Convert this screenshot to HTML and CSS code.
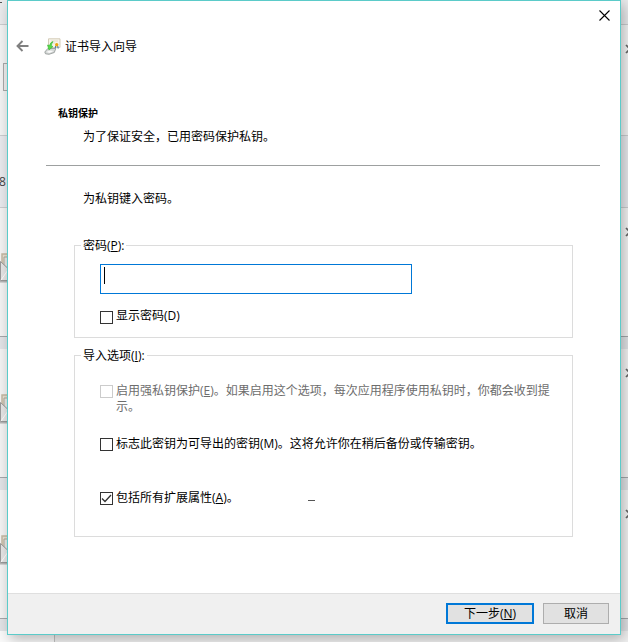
FILE: index.html
```html
<!DOCTYPE html>
<html lang="zh-CN">
<head>
<meta charset="utf-8">
<title>证书导入向导</title>
<link rel="stylesheet" href="styles.css">
</head>
<body>
<svg class="defs" aria-hidden="true">
  <symbol id="mail" viewBox="0 0 14 30">
    <path d="M0 28.500h14" stroke="#b5b5b5" stroke-width="2"/>
    <path d="M2 11V1h12v16z" fill="#e8e0d1" stroke="#c4b8a2" stroke-width="1.500"/>
    <path d="M4 4h10v13H4z" fill="#e7e9e8" stroke="#b0a998"/>
    <path d="M.5 8.500 14 21v6.500H.5z" fill="#e6e6e6" stroke="#999"/>
    <path d="M1 27 8 17" stroke="#fff"/>
  </symbol>
  <symbol id="cross" viewBox="0 0 10 10">
    <path d="m1 1 8 8M9 1 1 9" stroke="#666" stroke-width="1.700" fill="none"/>
  </symbol>
</svg>
<div class="backdrop">
  <div class="strip strip-top"><i class="scrap"></i></div>
  <div class="strip strip-tools"><i class="stub"></i><svg class="cross"><use href="#cross"/></svg></div>
  <div class="strip strip-info"><span>8</span></div>
  <div class="card"><svg class="mail"><use href="#mail"/></svg><svg class="cross"><use href="#cross"/></svg></div>
  <div class="card"><svg class="mail"><use href="#mail"/></svg><svg class="cross"><use href="#cross"/></svg></div>
  <div class="card"><svg class="mail"><use href="#mail"/></svg><svg class="cross"><use href="#cross"/></svg></div>
  <div class="last"><i class="last-side"></i></div>
</div>

<main class="dialog">
  <div class="caption">
    <svg width="11" height="11" viewBox="0 0 11 11"><path d="M.5.5l10 10M10.500.5l-10 10" stroke="#000" stroke-width="1.100"/></svg>
  </div>
  <header class="heading">
    <svg class="back" width="13" height="12" viewBox="0 0 13 12"><path d="M12.500 6H1.500M6.500 1l-5 5 5 5" fill="none" stroke="#808080" stroke-width="1.900"/></svg>
    <svg class="cert" width="17" height="17" viewBox="0 0 17 17">
      <path d="M4.500.8h11.500v8.700H4.500z" fill="#f7f4ea" stroke="#d3cbb7"/>
      <path d="M7 3h7M8 5h3" stroke="#ded7c6" stroke-width=".8"/>
      <path d="m11.700 8-.5 2.500M13.700 8l.5 2.500" stroke="#4b7cae" stroke-width="1.200"/>
      <circle cx="12.700" cy="6.800" r="1.700" fill="#e8a414"/>
      <path d="m.8 14 3-3.500h8l-1.500 4L5 16.300l-3.500-.5z" fill="#d5d8d7" stroke="#8d9390" stroke-width=".8"/>
      <path d="m2.500 14 3-1.500 4 .5-4 2z" fill="#fafafa"/>
      <path d="M9 3.500Q6.500 4 5.500 7.500L3.500 7 5 12l4-3.500-1.700-.6Q7.500 5.500 9 3.500z" fill="#55d947" stroke="#35b933" stroke-width=".6"/>
    </svg>
    <h1>证书导入向导</h1>
  </header>

  <section class="intro">
    <h2>私钥保护</h2>
    <p>为了保证安全，已用密码保护私钥。</p>
  </section>

  <section class="body">
    <p class="prompt">为私钥键入密码。</p>
    <div class="group group-password">
      <div class="legend">密码(<u>P</u>):</div>
      <div class="password"><i class="caret"></i></div>
      <div class="option"><i class="box"></i><span>显示密码(D)</span></div>
    </div>
    <div class="group group-options">
      <div class="legend">导入选项(<u>I</u>):</div>
      <div class="option disabled"><i class="box"></i><span>启用强私钥保护(<u>E</u>)。如果启用这个选项，每次应用程序使用私钥时，你都会收到提<br>示。</span></div>
      <div class="option exportable"><i class="box"></i><span>标志此密钥为可导出的密钥(M)。这将允许你在稍后备份或传输密钥。</span></div>
      <div class="option extended"><i class="box"><svg width="11" height="11" viewBox="0 0 11 11"><path d="m1 5.500 3 3L10 2" fill="none" stroke="#333" stroke-width="1.300"/></svg></i><span>包括所有扩展属性(<u>A</u>)。</span><i class="dash"></i></div>
    </div>
  </section>

  <footer class="actions">
    <div class="button primary">下一步(<u>N</u>)</div>
    <div class="button">取消</div>
  </footer>
</main>
</body>
</html>
```
FILE: styles.css
```css
* { box-sizing: border-box; }

body {
  margin: 0;
  position: relative;
  width: 628px;
  height: 642px;
  overflow: hidden;
  background: #e2e4e7;
  color: #000;
  font: 12px/16px "Open Sans", "Noto Sans CJK SC", sans-serif;
}

h1, h2, p { margin: 0; font-size: 12px; font-weight: 400; }
svg { display: block; flex: none; }
u { text-decoration: underline; text-underline-offset: 1px; text-decoration-thickness: 1px; text-decoration-skip-ink: none; }
.defs { position: absolute; width: 0; height: 0; }

/* Page behind the dialog */
.backdrop { display: flex; flex-direction: column; height: 642px; }
.strip { display: flex; justify-content: space-between; border-bottom: 1px solid #cbcdcf; flex: none; }
.strip-top { height: 25px; background: #eaebed; }
.scrap { width: 2px; height: 1px; margin-top: 2px; background: #555; }
.strip-tools { height: 111px; background: #f3f4f4; padding-top: 19px; }
.stub { width: 14px; height: 28px; margin: 19px 0 0 3px; border: 1px solid #aaa; background: #eee; }
.strip-info { height: 72px; padding: 38px 0 0; background: #e9eaee; color: #444; }
.strip-info span { margin-left: -1px; }
.card { display: flex; justify-content: space-between; height: 129px; margin-bottom: 12px; flex: none; background: #f4f4f4; border-bottom: 1px solid #a5a7aa; padding-top: 19px; }
.mail { width: 14px; height: 30px; margin-top: 26px; }
.cross { width: 10px; height: 10px; margin-right: -7px; }
.last { flex: 1; display: flex; background: #f2f2f2; }
.last-side { width: 55px; border-right: 1px solid #c4c4c4; background: #fafafa; }

/* Dialog window */
.dialog {
  position: absolute;
  top: 0;
  left: 7px;
  width: 614px;
  height: 635px;
  display: flex;
  flex-direction: column;
  background: #fff;
  border: 1px solid #5bcbc9;
  box-shadow: 3px 4px 13px rgba(0, 0, 0, .28);
}
.caption { display: flex; justify-content: flex-end; padding: 9px 10px 0 0; height: 29px; }
.heading { display: flex; align-items: center; height: 32px; padding-left: 8px; }
.cert { margin-left: 15px; }
.heading h1 { margin: 2px 0 0 4px; }

.intro { height: 104px; margin: 0 20px 0 38px; padding: 43px 0 0 12px; border-bottom: 1px solid #9da0a0; }
.intro h2 { font-size: 10px; font-weight: 700; line-height: 16px; }
.intro p { margin: 8px 0 0 25px; }

.body { flex: 1; padding: 25px 47px 0 66px; }
.prompt { margin-left: 9px; }
.group { border: 1px solid #dcdcdc; }
.legend { width: max-content; margin: -8px 0 0 6px; padding: 0 2px; background: #fff; }
.group-password { height: 93px; margin-top: 38px; }
.group-options { height: 182px; margin-top: 17px; }
.password { width: 312px; height: 30px; margin: 10px 0 0 25px; border: 1px solid #0078d7; padding: 2px 3px; }
.caret { display: block; width: 1px; height: 17px; background: #000; }
.option { display: flex; margin-left: 25px; }
.box { width: 13px; height: 13px; margin: 2px 3px 0 0; border: 1px solid #333; flex: none; }
.password + .option { margin-top: 14px; }
.password + .option .box { margin-top: 3px; }
.disabled { margin-top: 19px; color: #6d6d6d; }
.disabled .box { border-color: #ccc; }
.exportable { margin-top: 21px; }
.extended { margin-top: 38px; }
.dash { width: 7px; height: 1px; margin: 10px 0 0 69px; background: #555; }

.actions { display: flex; justify-content: flex-end; gap: 9px; height: 41px; padding: 9px 11px 0 0; background: #f0f0f0; border-top: 1px solid #dfdfdf; }
.button { width: 66px; height: 21px; border: 1px solid #adadad; background: #e1e1e1; text-align: center; line-height: 19px; }
.primary { width: 88px; border: 2px solid #0078d7; line-height: 17px; }
```
